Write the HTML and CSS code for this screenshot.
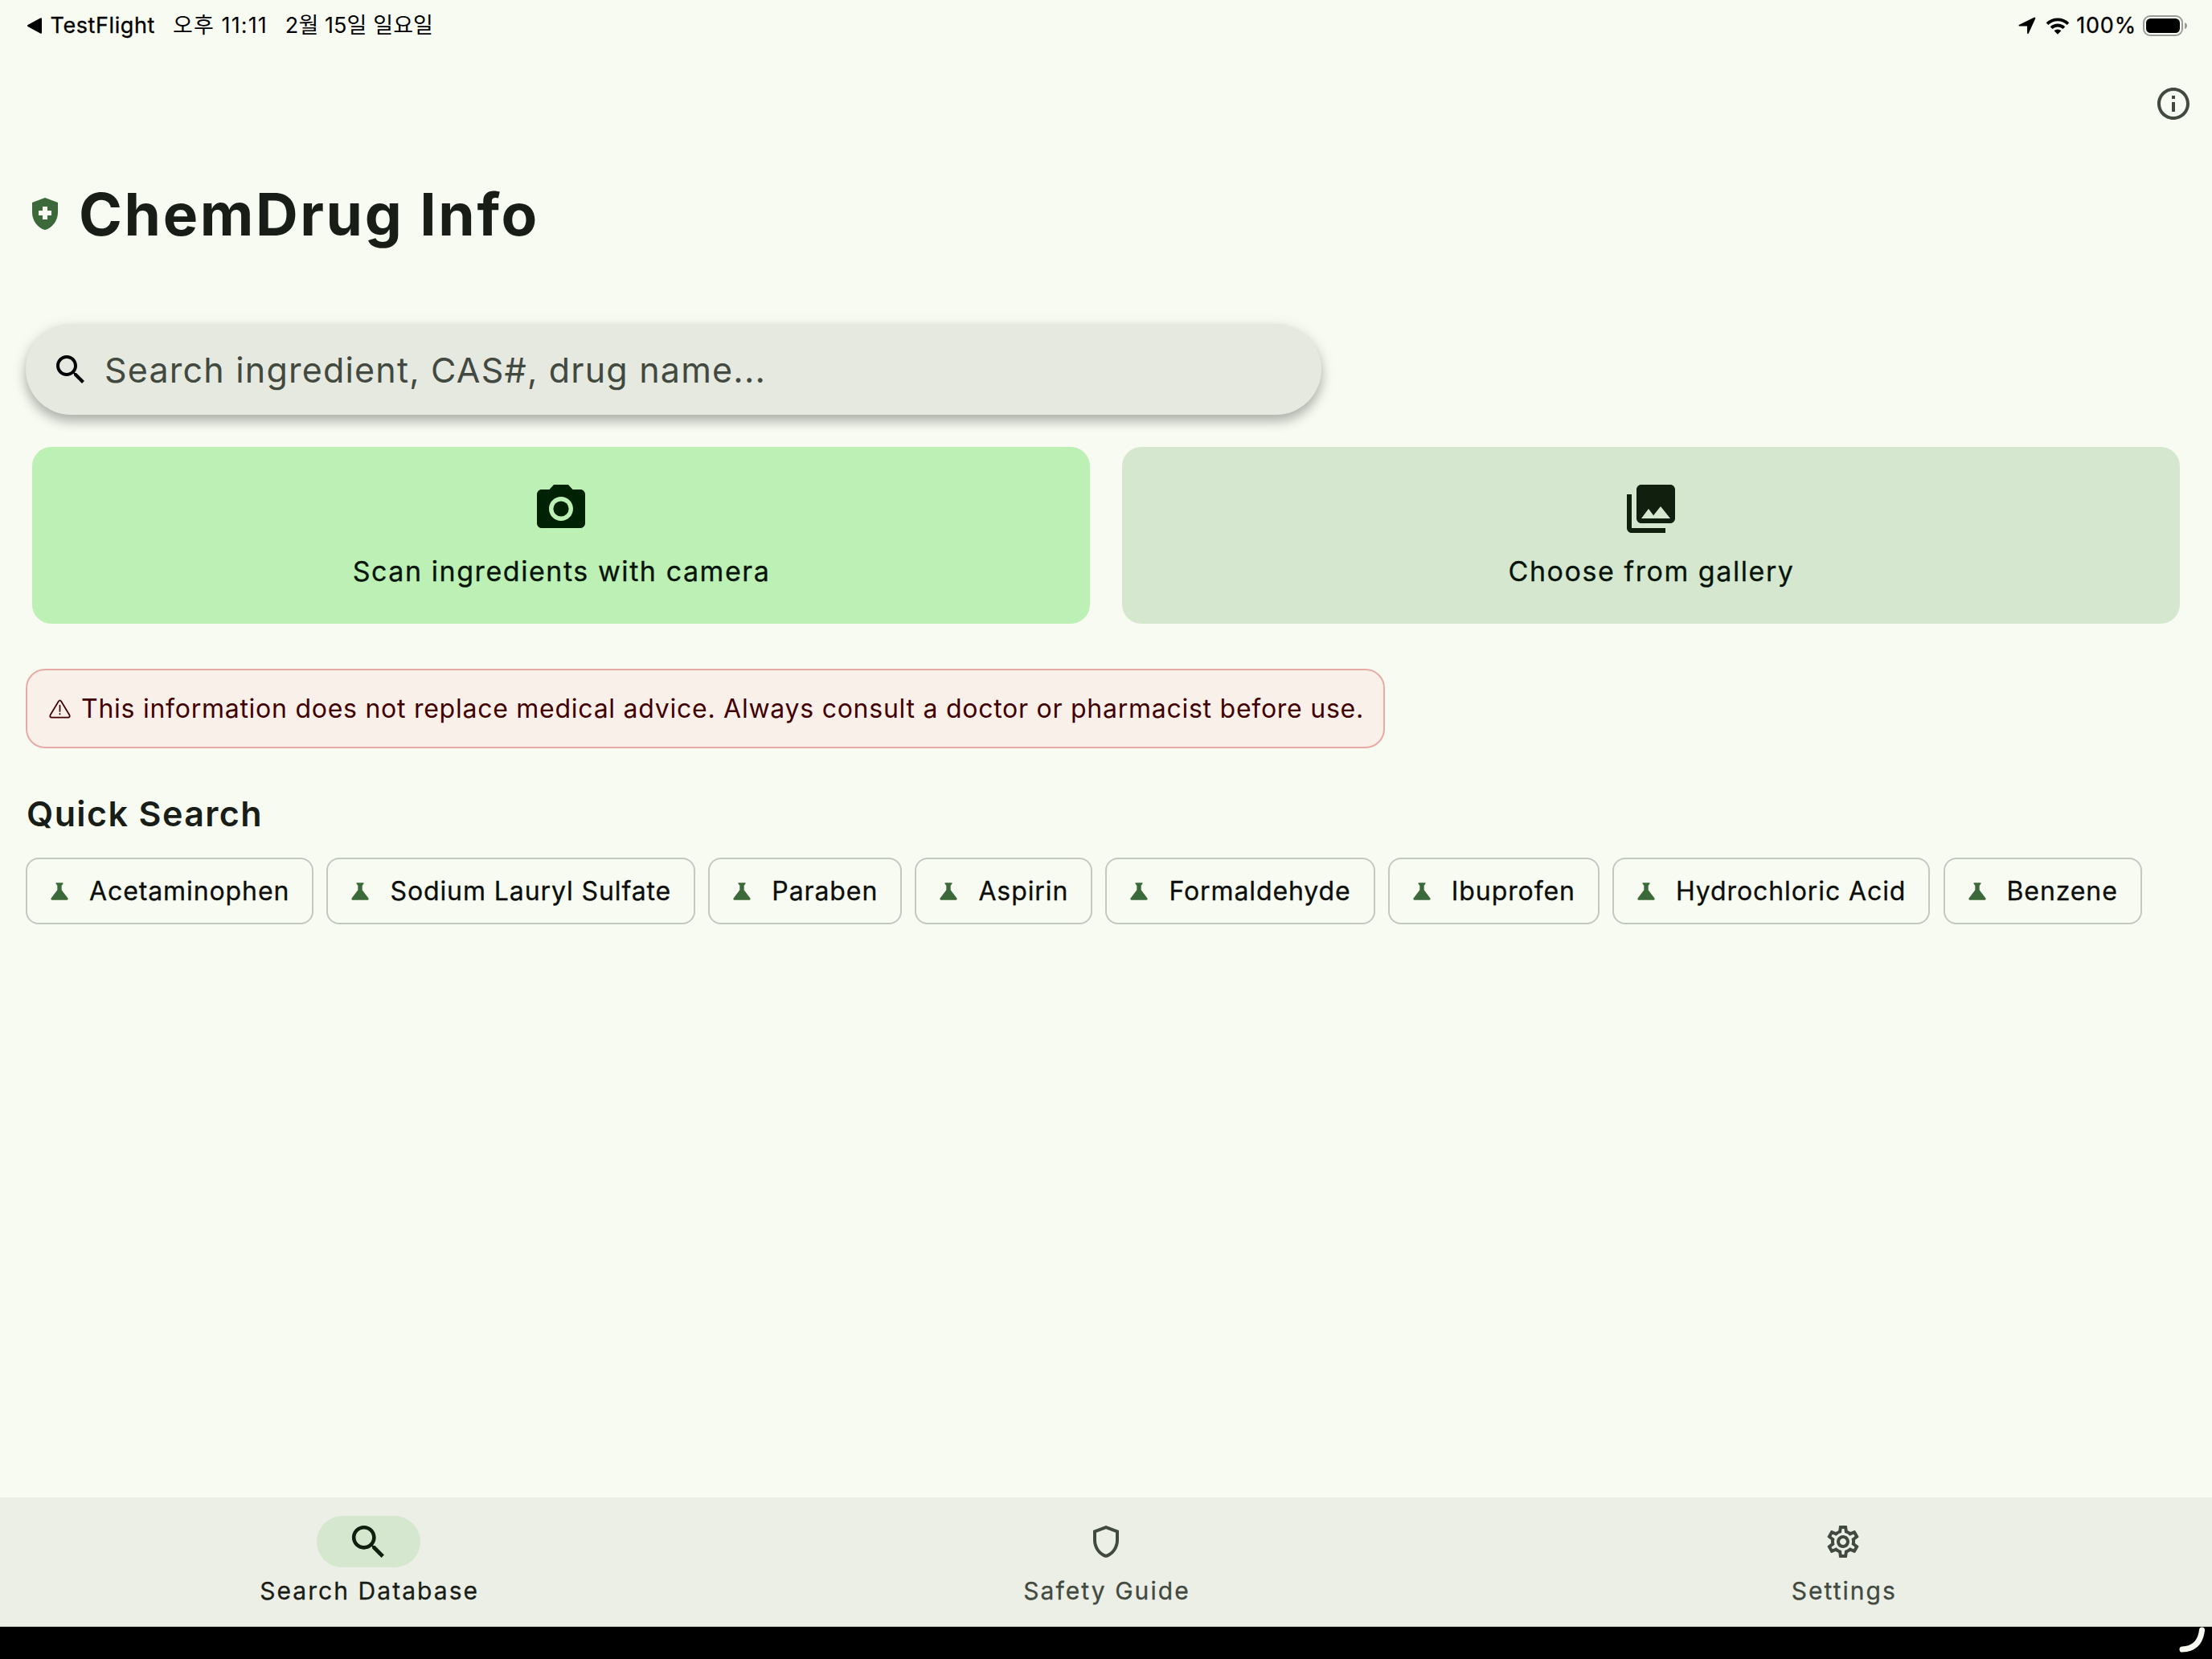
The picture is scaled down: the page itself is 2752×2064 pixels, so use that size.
FILE: index.html
```html
<!DOCTYPE html>
<html lang="ko">
<head>
<meta charset="utf-8">
<title>ChemDrug Info</title>
<link rel="stylesheet" href="styles.css">
</head>
<body>
<svg class="defs" aria-hidden="true">
  <symbol id="search" viewBox="0 0 24 24"><path d="M15.5 14h-.79l-.28-.27C15.41 12.59 16 11.11 16 9.5 16 5.91 13.09 3 9.5 3S3 5.91 3 9.5 5.91 16 9.5 16c1.61 0 3.09-.59 4.23-1.57l.27.28v.79l5 4.99L20.49 19l-4.99-5zm-6 0C7.01 14 5 11.99 5 9.5S7.01 5 9.5 5 14 7.01 14 9.5 11.99 14 9.5 14z"/></symbol>
  <symbol id="flask" viewBox="0 0 24 24"><path d="M19.8 18.4L14 10.67V6.5l1.35-1.69c.26-.33.03-.81-.39-.81H9.04c-.42 0-.65.48-.39.81L10 6.5v4.17L4.2 18.4c-.49.66-.02 1.6.8 1.6h14c.82 0 1.29-.94.8-1.6z"/></symbol>
</svg>
<div class="app">
  <header class="status">
    <div class="status-left">
      <svg class="back" viewBox="0 0 18 20"><path d="M.5 9 16.200.600q1.800-.8 1.800 1v16.800q0 1.800-1.800 1L.5 11q-1-1 0-2z"/></svg>
      <span class="testflight">TestFlight</span>
      <span class="time">오후 11:11</span>
      <span class="date">2월 15일 일요일</span>
    </div>
    <div class="status-right">
      <svg class="location" viewBox="0 0 22 22"><path d="M1.200 9.700 19.600.700q2.200-.8 1.600 1.500L12.800 20.400q-1.200 1.800-1.700-.3V11.400H1.600q-2-.5-.4-1.700z"/></svg>
      <svg class="wifi" viewBox="0 0 30 21"><path class="arc" d="M2 7.700a18.600 18.600 0 0 1 26 0M7.100 12.700a11.400 11.400 0 0 1 15.800 0"/><path d="M15 20.800 10.600 16.300a6.300 6.300 0 0 1 8.800 0z"/></svg>
      <span class="percent">100%</span>
      <svg class="battery" viewBox="0 0 56 26"><rect class="shell" x="1" y="1" width="48" height="24" rx="8"/><rect x="4" y="4" width="42" height="18" rx="5.500"/><path class="cap" d="M52 9q3 1 3 4t-3 4z"/></svg>
    </div>
  </header>

  <div class="toolbar">
    <svg class="icon48 muted" viewBox="0 0 24 24"><path d="M11 7h2v2h-2zm0 4h2v6h-2zm1-9C6.480 2 2 6.480 2 12s4.480 10 10 10 10-4.480 10-10S17.520 2 12 2zm0 18c-4.410 0-8-3.590-8-8s3.590-8 8-8 8 3.590 8 8-3.590 8-8 8z"/></svg>
  </div>

  <main>
    <div class="title">
      <svg class="icon48 brand" viewBox="0 0 24 24"><path d="M10.500 13H8v-3h2.500V7.500h3V10H16v3h-2.500v2.500h-3V13zM12 2L4 5v6.090c0 5.050 3.410 9.760 8 10.910 4.590-1.150 8-5.860 8-10.910V5l-8-3z" fill-rule="evenodd"/></svg>
      <h1>ChemDrug Info</h1>
    </div>

    <div class="searchbar">
      <svg class="icon48"><use href="#search"/></svg>
      <span>Search ingredient, CAS#, drug name...</span>
    </div>

    <div class="cards">
      <div class="card camera">
        <svg class="icon72" viewBox="0 0 24 24"><circle cx="12" cy="12" r="3.200"/><path d="M9 2L7.170 4H4c-1.100 0-2 .9-2 2v12c0 1.100.9 2 2 2h16c1.100 0 2-.9 2-2V6c0-1.100-.9-2-2-2h-3.170L15 2H9zm3 15c-2.760 0-5-2.240-5-5s2.240-5 5-5 5 2.240 5 5-2.240 5-5 5z"/></svg>
        <span>Scan ingredients with camera</span>
      </div>
      <div class="card gallery">
        <svg class="icon72" viewBox="0 0 24 24"><path d="M22 16V4c0-1.100-.9-2-2-2H8c-1.100 0-2 .9-2 2v12c0 1.100.9 2 2 2h12c1.100 0 2-.9 2-2zm-11-4l2.030 2.710L16 11l4 5H8l3-4zM2 6v14c0 1.100.9 2 2 2h14v-2H4V6H2z"/></svg>
        <span>Choose from gallery</span>
      </div>
    </div>

    <div class="warning">
      <svg class="alert" viewBox="0 0 28 24"><path d="M12.300 2.200q1.700-2.600 3.400 0L26.300 19.800q1.400 3-1.800 3.200H3.500Q.3 22.800 1.700 19.800z"/><path d="M14 7.500v7.500M14 18.200v.6"/></svg>
      <span>This information does not replace medical advice. Always consult a doctor or pharmacist before use.</span>
    </div>

    <h2>Quick Search</h2>
    <div class="chips">
      <div class="chip"><svg><use href="#flask"/></svg><span>Acetaminophen</span></div>
      <div class="chip"><svg><use href="#flask"/></svg><span>Sodium Lauryl Sulfate</span></div>
      <div class="chip"><svg><use href="#flask"/></svg><span>Paraben</span></div>
      <div class="chip"><svg><use href="#flask"/></svg><span>Aspirin</span></div>
      <div class="chip"><svg><use href="#flask"/></svg><span>Formaldehyde</span></div>
      <div class="chip"><svg><use href="#flask"/></svg><span>Ibuprofen</span></div>
      <div class="chip"><svg><use href="#flask"/></svg><span>Hydrochloric Acid</span></div>
      <div class="chip"><svg><use href="#flask"/></svg><span>Benzene</span></div>
    </div>
  </main>

  <nav>
    <div class="tab active">
      <div class="pill"><svg class="icon56"><use href="#search"/></svg></div>
      <span>Search Database</span>
    </div>
    <div class="tab">
      <div class="pill"><svg class="icon48" viewBox="0 0 24 24"><path d="M12 2L4 5v6.090c0 5.050 3.410 9.760 8 10.910 4.590-1.150 8-5.860 8-10.910V5l-8-3zm6 9.090c0 4-2.550 7.700-6 8.830-3.450-1.130-6-4.820-6-8.830v-4.700l6-2.250 6 2.250v4.700z"/></svg></div>
      <span>Safety Guide</span>
    </div>
    <div class="tab">
      <div class="pill"><svg class="icon48" viewBox="0 0 24 24"><path d="M19.430 12.980c.04-.32.07-.64.07-.98 0-.34-.03-.66-.07-.98l2.110-1.650c.19-.15.24-.42.12-.64l-2-3.460c-.09-.16-.26-.25-.44-.25-.06 0-.12.010-.17.030l-2.490 1c-.52-.4-1.080-.73-1.690-.98l-.38-2.650C14.460 2.180 14.250 2 14 2h-4c-.25 0-.46.18-.49.42l-.38 2.650c-.61.25-1.170.59-1.690.98l-2.490-1c-.06-.02-.12-.03-.18-.03-.17 0-.34.09-.43.250l-2 3.460c-.13.22-.07.49.12.64l2.110 1.650c-.04.32-.07.65-.07.98 0 .33.03.66.07.98l-2.110 1.650c-.19.15-.24.42-.12.64l2 3.460c.09.16.26.25.44.25.06 0 .12-.01.17-.03l2.490-1c.52.4 1.080.73 1.690.98l.38 2.650c.03.24.24.42.49.42h4c.25 0 .46-.18.49-.42l.38-2.650c.61-.25 1.170-.59 1.690-.98l2.490 1c.06.02.12.03.18.03.17 0 .34-.09.43-.25l2-3.460c.12-.22.07-.49-.12-.64l-2.110-1.650zm-1.980-1.710c.04.31.05.52.05.73 0 .21-.02.43-.05.73l-.14 1.130.89.7 1.080.84-.7 1.210-1.270-.51-1.040-.42-.9.68c-.43.32-.84.56-1.250.73l-1.060.43-.16 1.130-.2 1.350h-1.400l-.19-1.350-.16-1.130-1.060-.43c-.43-.18-.83-.41-1.230-.71l-.91-.7-1.060.43-1.270.51-.7-1.210 1.080-.84.89-.7-.14-1.130c-.03-.31-.05-.54-.05-.74s.02-.43.05-.73l.14-1.130-.89-.7-1.080-.84.7-1.210 1.270.51 1.040.42.9-.68c.43-.32.84-.56 1.250-.73l1.060-.43.16-1.130.2-1.350h1.390l.19 1.350.16 1.130 1.060.43c.43.18.83.41 1.230.71l.91.7 1.060-.43 1.270-.51.7 1.210-1.070.85-.89.7.14 1.130zM12 8c-2.210 0-4 1.790-4 4s1.790 4 4 4 4-1.790 4-4-1.790-4-4-4zm0 6c-1.100 0-2-.9-2-2s.9-2 2-2 2 .9 2 2-.9 2-2 2z"/></svg></div>
      <span>Settings</span>
    </div>
  </nav>
  <footer>
    <svg viewBox="0 0 44 40"><path d="M7 28Q29 27 31.500 4"/></svg>
  </footer>
</div>
</body>
</html>
```
FILE: styles.css
```css
* { box-sizing: border-box; }
body {
  margin: 0;
  background: #f8fbf2;
  color: #191d17;
  font-family: Inter, "Noto Sans CJK KR", sans-serif;
}
svg { display: block; flex: none; fill: currentColor; }
span { white-space: nowrap; }
.defs { position: absolute; width: 0; height: 0; }
.icon48 { width: 48px; height: 48px; }
.icon56 { width: 55px; height: 55px; }
.icon72 { width: 72px; height: 72px; }

.app { width: 2752px; height: 2064px; display: flex; flex-direction: column; overflow: hidden; }

.status {
  height: 64px;
  padding: 0 30px 0 34px;
  display: flex;
  justify-content: space-between;
  color: #000;
  font-size: 27px;
  font-weight: 400;
  line-height: 64px;
  -webkit-text-stroke: 0.3px currentColor;
}
.status-left, .status-right { display: flex; align-items: center; }
.back { width: 18px; height: 20px; margin-right: 10.500px; }
.testflight { margin-right: 22px; letter-spacing: 0.6px; }
.time { margin-right: 22px; letter-spacing: 1.1px; }
.date { letter-spacing: 0.1px; }
.time, .date { -webkit-text-stroke-width: 0; }
.location { width: 22px; height: 22px; margin-right: 12px; }
.wifi { width: 30px; height: 21px; margin-right: 8px; }
.wifi .arc { fill: none; stroke: #000; stroke-width: 3.8; }
.percent { margin-right: 8px; letter-spacing: 0.8px; }
.battery { width: 56px; height: 26px; }
.battery .shell { fill: none; stroke: #9a9d97; stroke-width: 2; }
.battery .cap { fill: #9a9d97; }

.toolbar { height: 130px; padding: 41px 24px 0; display: flex; justify-content: flex-end; }
.muted { color: #424940; }

main { flex: 1; padding: 0 32px; }
.title { height: 209px; padding-top: 23px; display: flex; align-items: flex-start; gap: 18px; }
.brand { margin-top: 25px; color: #3b6939; }
h1 { margin: 0; font-size: 73px; font-weight: 700; line-height: 100px; letter-spacing: 2.6px; }

.searchbar {
  width: 1612px;
  height: 113px;
  padding: 0 32px;
  display: flex;
  align-items: center;
  gap: 18px;
  border-radius: 57px;
  background: #e6e9e0;
  box-shadow: 0 8px 14px rgba(0, 0, 0, 0.26), 0 4px 22px rgba(0, 0, 0, 0.08);
  color: #000;
}
.searchbar span { color: #424940; font-size: 43px; font-weight: 400; letter-spacing: 1.2px; }

.cards { padding: 40px 8px 0; display: grid; grid-template-columns: 1fr 1fr; gap: 40px; }
.card { height: 220px; padding-top: 41px; display: flex; flex-direction: column; align-items: center; gap: 18px; border-radius: 24px; }
.camera { background: #bcf0b4; color: #002204; }
.gallery { background: #d5e8cf; color: #111f0f; }
.card span { padding-left: 1px; color: #06140a; font-size: 34px; font-weight: 400; line-height: 48px; letter-spacing: 1.56px; -webkit-text-stroke: 0.3px currentColor; }

.warning {
  width: 1691px;
  height: 99px;
  margin-top: 56px;
  padding: 0 27px;
  display: flex;
  align-items: center;
  gap: 13px;
  border: 2px solid #e8aaa5;
  border-radius: 24px;
  background: #faf0ea;
  color: #410002;
}
.warning span { font-size: 32px; font-weight: 400; letter-spacing: 0.74px; }
.alert { width: 27px; height: 24px; fill: none; stroke: currentColor; stroke-width: 1.8; stroke-linecap: round; }

h2 { margin: 55px 0 29px; padding-left: 1px; font-size: 43px; font-weight: 600; line-height: 52px; letter-spacing: 1.4px; }
.chips { display: flex; gap: 16.2px; }
.chip { height: 83px; padding: 0 28px 0 24px; display: flex; align-items: center; gap: 21px; border: 2px solid #c2c9bd; border-radius: 16px; color: #0b0e0a; }
.chip svg { width: 32px; height: 32px; color: #3b6939; }
.chip span { font-size: 32px; font-weight: 400; letter-spacing: 0.9px; -webkit-text-stroke: 0.3px currentColor; }

nav { height: 161px; background: #ebefe6; border-bottom: 1px solid #c9ccc4; display: grid; grid-template-columns: repeat(3, 1fr); }
.tab { padding-top: 23px; display: flex; flex-direction: column; align-items: center; gap: 9px; color: #424940; }
.tab span { padding-left: 2px; font-size: 30px; font-weight: 400; line-height: 40px; letter-spacing: 2.05px; -webkit-text-stroke: 0.3px currentColor; }
.pill { width: 129px; height: 64px; display: flex; align-items: center; justify-content: center; border-radius: 32px; }
.active { color: #191d17; }
.active .pill { background: #d5e8cf; color: #111f0f; }

footer { height: 40px; background: #000; display: flex; justify-content: flex-end; }
footer svg { width: 44px; height: 40px; fill: none; stroke: #f8fbf2; stroke-width: 7; stroke-linecap: round; }
```
